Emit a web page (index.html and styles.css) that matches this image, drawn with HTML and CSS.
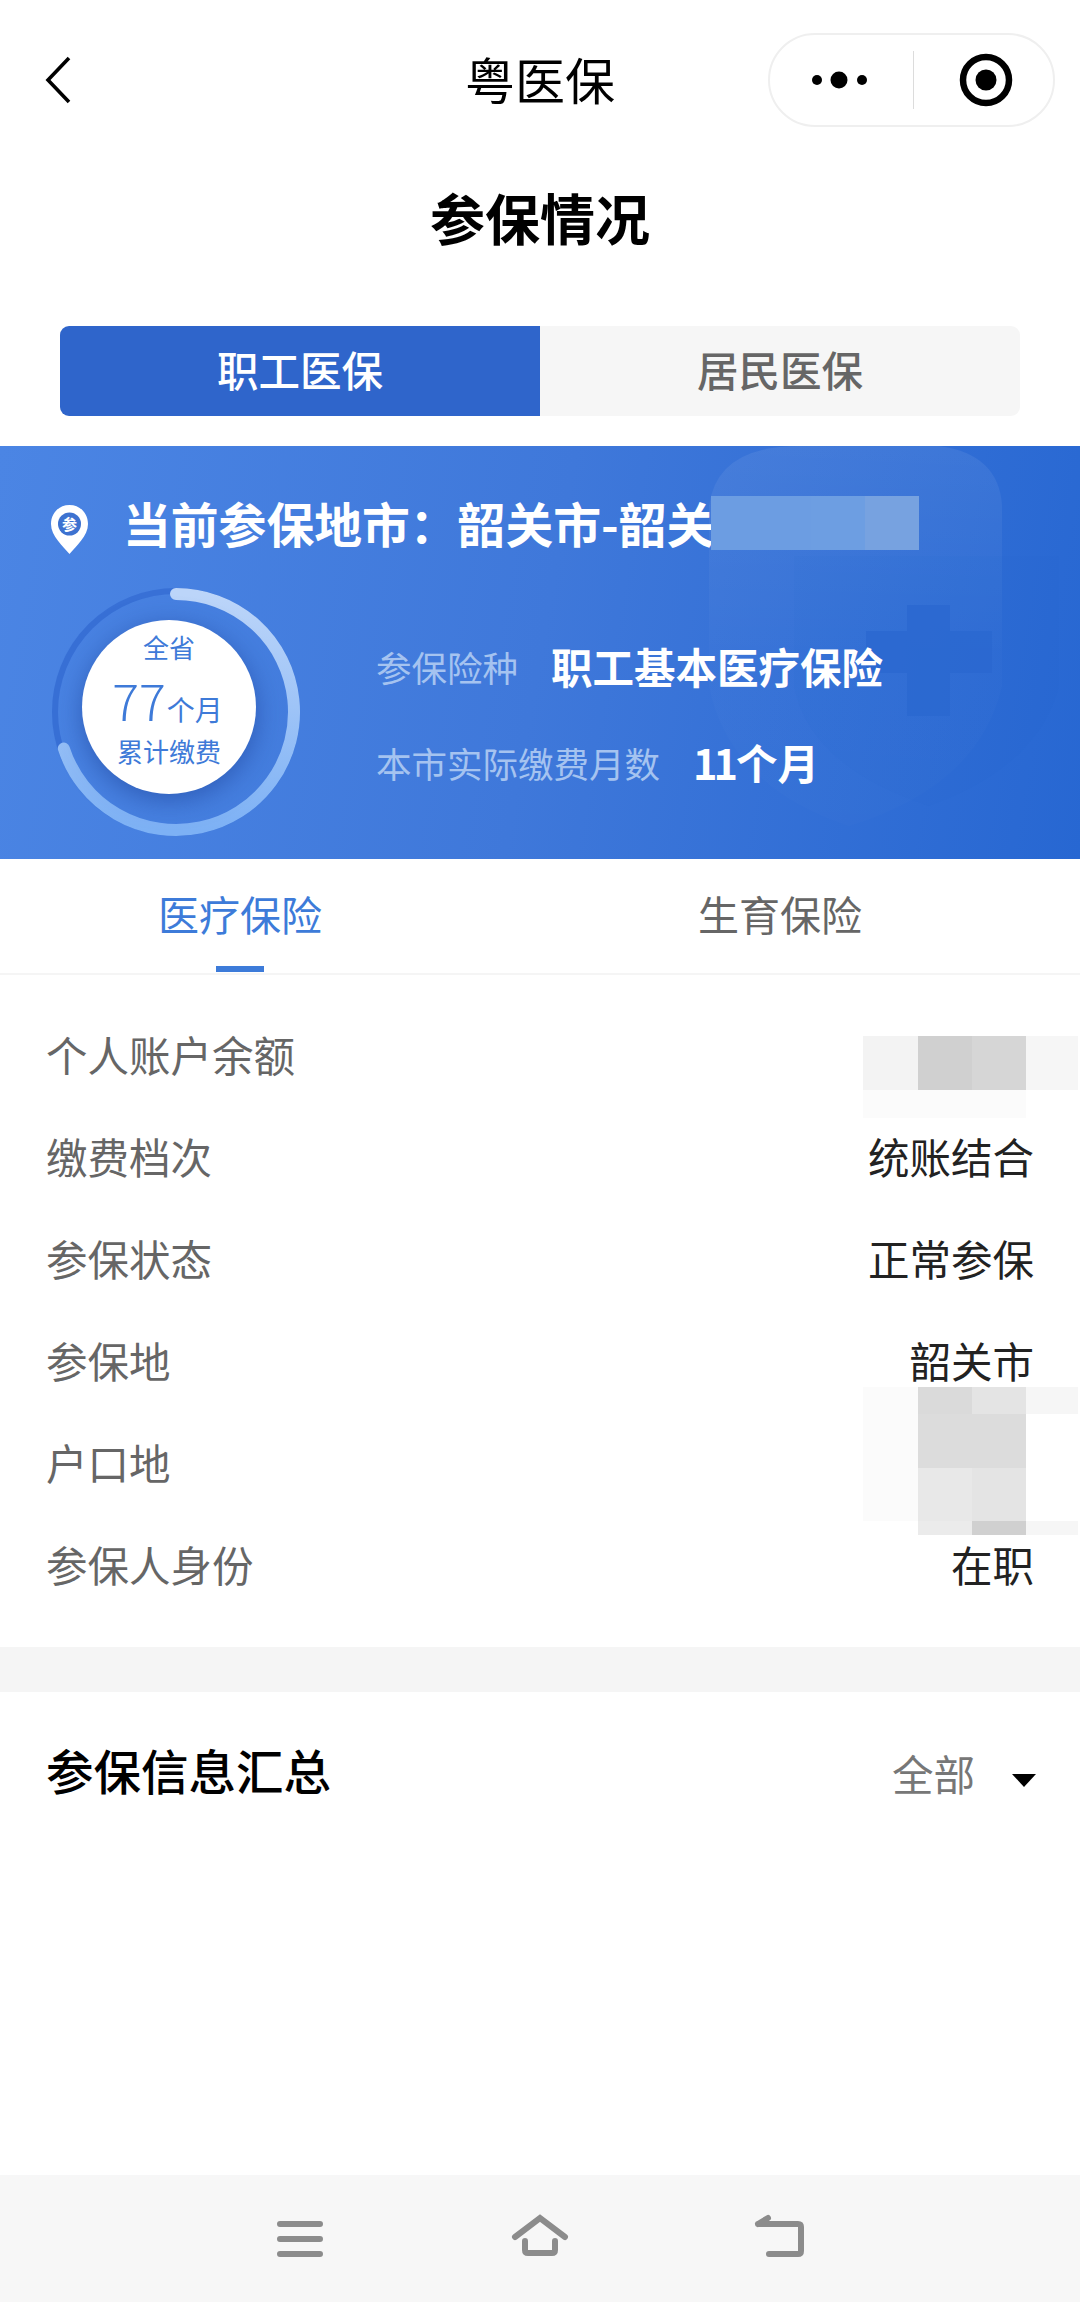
FILE: index.html
```html
<!DOCTYPE html>
<html lang="zh-CN">
<head>
<meta charset="utf-8">
<title>粤医保</title>
<link rel="stylesheet" href="styles.css">
</head>
<body>
<div class="page">
  <header class="nav">
    <svg class="nav-back" width="28" height="48" viewBox="0 0 28 48"><path d="M25 2 L4 24 L25 46" fill="none" stroke="#000" stroke-width="3.6"/></svg>
    <div class="nav-title">粤医保</div>
    <div class="capsule">
      <svg class="capsule-more" width="143" height="94" viewBox="0 0 143 94"><circle cx="47" cy="48" r="5" fill="#000"/><circle cx="69" cy="48" r="8.5" fill="#000"/><circle cx="92" cy="48" r="5" fill="#000"/></svg>
      <span class="capsule-line"></span>
      <svg class="capsule-target" width="143" height="94" viewBox="0 0 143 94"><circle cx="72" cy="48" r="23" fill="none" stroke="#000" stroke-width="6.5"/><circle cx="72" cy="48" r="10.5" fill="#000"/></svg>
    </div>
  </header>

  <h1 class="page-title">参保情况</h1>

  <div class="switch">
    <div class="switch-item is-on">职工医保</div>
    <div class="switch-item">居民医保</div>
  </div>

  <section class="hero">
    <svg class="hero-mark" width="371" height="413" viewBox="0 0 371 413">
      <defs>
        <linearGradient id="fade" x1="0" y1="0" x2="0" y2="1">
          <stop offset="0" stop-color="#fff" stop-opacity=".07"/>
          <stop offset=".55" stop-color="#fff" stop-opacity=".015"/>
          <stop offset="1" stop-color="#fff" stop-opacity=".01"/>
        </linearGradient>
      </defs>
      <path d="M0 60 Q8 0 90 0 L230 0 Q290 8 293 60 L293 240 Q270 340 140 380 Q20 340 0 240 Z" fill="url(#fade)"/>
      <path d="M85 110 L350 110 L350 240 Q330 320 220 360 Q100 320 85 240 Z" fill="#2a68d0" fill-opacity=".06"/>
      <path d="M198 159 H241 V185 H283 V227 H241 V270 H198 V227 H157 V185 H198 Z" fill="#2a68d0" fill-opacity=".8"/>
    </svg>
    <div class="hero-city">
      <svg class="pin" width="37" height="49" viewBox="0 0 37 49">
        <path d="M18.5 0 C8 0 0 8 0 19 C0 31 12 41 18.5 49 C25 41 37 31 37 19 C37 8 29 0 18.5 0 Z" fill="#fff"/>
        <circle cx="18.5" cy="19" r="11.5" fill="#3d72d0"/>
        <text x="18.5" y="24.5" text-anchor="middle" class="pin-text">参</text>
      </svg>
      <span class="city-text">当前参保地市：韶关市-韶关</span>
      <div class="hero-mosaic">
        <span class="hm1"></span><span class="hm2"></span><span class="hm3"></span>
      </div>
    </div>
    <div class="hero-body">
      <div class="gauge">
        <svg class="gauge-ring" width="260" height="260" viewBox="0 0 260 260">
          <defs>
            <linearGradient id="arc" x1="0" y1="0" x2="0" y2="1">
              <stop offset="0" stop-color="#bcd5f9"/>
              <stop offset="1" stop-color="#7db1f5"/>
            </linearGradient>
          </defs>
          <circle cx="130" cy="130" r="121" fill="none" stroke="#3870d6" stroke-width="6"/>
          <path d="M130 12 A118 118 0 1 1 17.8 166.5" fill="none" stroke="url(#arc)" stroke-width="12" stroke-linecap="round"/>
        </svg>
        <div class="gauge-core">
          <div class="core-line">全省</div>
          <div class="core-num"><span class="num">77</span><span class="unit">个月</span></div>
          <div class="core-line">累计缴费</div>
        </div>
      </div>
      <div class="hero-info">
        <div class="info-row"><span class="info-label">参保险种</span><span class="info-value">职工基本医疗保险</span></div>
        <div class="info-row"><span class="info-label">本市实际缴费月数</span><span class="info-value"><span class="digits">11</span>个月</span></div>
      </div>
    </div>
  </section>

  <div class="tabs">
    <div class="tab is-on"><span class="tab-text">医疗保险</span><span class="tab-bar"></span></div>
    <div class="tab"><span class="tab-text">生育保险</span></div>
  </div>

  <div class="rows">
    <div class="row">
      <span class="row-label">个人账户余额</span>
      <div class="mosaic mosaic-a">
        <i class="g3"></i><i class="g8"></i><i class="g9"></i><i class="g4"></i>
        <i class="g1"></i><i class="g1"></i><i class="g1"></i><i></i>
      </div>
    </div>
    <div class="row"><span class="row-label">缴费档次</span><span class="row-value">统账结合</span></div>
    <div class="row"><span class="row-label">参保状态</span><span class="row-value">正常参保</span></div>
    <div class="row"><span class="row-label">参保地</span><span class="row-value">韶关市</span></div>
    <div class="row">
      <span class="row-label">户口地</span>
      <div class="mosaic mosaic-b">
        <i class="g1"></i><i class="g11"></i><i class="g12"></i><i class="g4"></i>
        <i class="g1"></i><i class="g10"></i><i class="g10"></i><i></i>
        <i class="g1"></i><i class="g13"></i><i class="g12"></i><i></i>
        <i></i><i class="g14"></i><i class="g8"></i><i class="g4"></i>
      </div>
    </div>
    <div class="row"><span class="row-label">参保人身份</span><span class="row-value">在职</span></div>
  </div>

  <div class="band"></div>

  <div class="summary">
    <h2 class="summary-title">参保信息汇总</h2>
    <div class="summary-filter"><span class="filter-text">全部</span><span class="filter-arrow"></span></div>
  </div>

  <footer class="sysbar">
    <svg width="60" height="60" viewBox="0 0 60 60"><path d="M10 15 H50 M10 30 H50 M10 45 H50" fill="none" stroke="#8c8c8c" stroke-width="6" stroke-linecap="round"/></svg>
    <svg width="60" height="60" viewBox="0 0 60 60"><path d="M5 28 L30 9 L55 28 M15 32 V41 Q15 44 18 44 H42 Q45 44 45 41 V32" fill="none" stroke="#8c8c8c" stroke-width="6" stroke-linecap="round"/></svg>
    <svg width="60" height="60" viewBox="0 0 60 60"><path d="M8 15 H48 Q51 15 51 18 V42 Q51 45 48 45 H19 M8 15 L18 9" fill="none" stroke="#8c8c8c" stroke-width="6" stroke-linecap="round"/></svg>
  </footer>
</div>
</body>
</html>
```

FILE: styles.css
```css
* { box-sizing: border-box; }
html, body { margin: 0; padding: 0; }
body {
  background: #fff;
  font-family: "Noto Sans CJK SC", "Noto Sans", sans-serif;
  color: #000;
}
.page {
  width: 1080px;
  height: 2302px;
  display: flex;
  flex-direction: column;
  overflow: hidden;
}

/* nav */
.nav {
  display: grid;
  grid-template-columns: 1fr auto 1fr;
  align-items: center;
  padding: 33px 25px 0;
}
.nav-back { justify-self: start; margin-left: 19px; }
.nav-title { font-size: 50px; line-height: 94px; margin-top: -4px; }
.capsule {
  justify-self: end;
  width: 287px;
  height: 94px;
  border: 2px solid #efefef;
  border-radius: 47px;
  display: flex;
  align-items: center;
}
.capsule-more, .capsule-target { flex: none; margin-top: -2px; }
.capsule-line { width: 1px; height: 58px; background: #dcdcdc; flex: none; }

.page-title {
  margin: 59px 0 0;
  font-size: 55px;
  line-height: 60px;
  font-weight: 700;
  text-align: center;
}

/* switch */
.switch {
  margin: 80px 60px 0;
  height: 90px;
  display: flex;
  border-radius: 9px;
  overflow: hidden;
  background: #f6f6f6;
}
.switch-item {
  flex: 1;
  display: flex;
  align-items: center;
  justify-content: center;
  padding-bottom: 5px;
  font-size: 41.5px;
  font-weight: 500;
  color: #666;
}
.switch-item.is-on { background: #2f65cb; color: #fff; }

/* hero */
.hero {
  position: relative;
  margin-top: 30px;
  height: 413px;
  background: linear-gradient(100deg, #4b85e4 0%, #3f78da 50%, #2767d2 100%);
  overflow: hidden;
}
.hero-mark { position: absolute; left: 709px; top: 0; }
.hero-city {
  position: relative;
  padding: 59px 0 0 51px;
  display: flex;
  align-items: center;
  gap: 35px;
  height: 107px;
}
.pin-text { font-size: 15px; fill: #fff; font-weight: 700; }
.city-text {
  font-size: 47.8px;
  line-height: 48px;
  font-weight: 700;
  color: #fff;
  white-space: nowrap;
  margin-bottom: 12px;
}
.hero-mosaic {
  position: absolute;
  left: 711px;
  top: 50px;
  height: 54px;
  display: flex;
}
.hero-mosaic span { display: block; height: 54px; }
.hm1 { width: 100px; background: #6c9de2; }
.hm2 { width: 54px; background: #6d9ee2; }
.hm3 { width: 54px; background: #77a2e0; }

.hero-body {
  position: relative;
  margin: 29px 0 0 46px;
  display: flex;
  gap: 70px;
}
.gauge { position: relative; width: 260px; height: 260px; flex: none; }
.gauge-ring { display: block; }
.gauge-core {
  position: absolute;
  left: 36px;
  top: 38px;
  width: 174px;
  height: 174px;
  border-radius: 50%;
  background: #fff;
  box-shadow: 0 6px 26px rgba(28, 64, 150, .55);
  color: #3e7ad8;
  text-align: center;
  padding-top: 10px;
}
.core-line { font-size: 26px; line-height: 34px; white-space: nowrap; }
.core-num {
  height: 70px;
  display: flex;
  align-items: baseline;
  justify-content: center;
  line-height: 70px;
  padding-right: 3px;
}
.num { font-size: 50px; font-weight: 300; }
.unit { font-size: 28px; margin-left: 1px; }

.hero-info { padding-top: 59px; display: flex; flex-direction: column; gap: 46px; }
.info-row { display: flex; align-items: center; gap: 33px; height: 50px; white-space: nowrap; }
.info-label { font-size: 35.5px; color: #a5c3f0; }
.info-value { font-size: 41.5px; font-weight: 700; color: #fff; }
.digits { letter-spacing: -4px; margin-right: 2px; }

/* tabs */
.tabs {
  display: grid;
  grid-template-columns: 480px 600px;
  height: 116px;
  border-bottom: 2px solid #f5f5f5;
  padding-top: 26px;
}
.tab { display: flex; flex-direction: column; align-items: center; }
.tab-text { font-size: 41px; line-height: 56px; color: #666; }
.tab.is-on .tab-text { color: #3d7bd9; }
.tab-bar { width: 48px; height: 6px; margin-top: 25px; background: #3d7bd9; }

/* rows */
.rows { padding: 28px 0 32px; }
.row {
  position: relative;
  height: 102px;
  display: flex;
  align-items: center;
  justify-content: space-between;
  padding: 0 46px;
  font-size: 41.5px;
}
.row-label { color: #666; }
.row-value { color: #222; margin-left: auto; }
.mosaic { position: absolute; display: grid; grid-template-columns: 55px 54px 54px 52px; }
.mosaic-a { left: 863px; top: 33px; grid-template-rows: 54px 28px; }
.mosaic-b { left: 863px; top: -24px; grid-template-rows: 27px 54px 53px 14px; }
.g1 { background: #fbfbfb; }
.g3 { background: #f3f3f3; }
.g4 { background: #f6f6f6; }
.g8 { background: #d0d0d0; }
.g9 { background: #d6d6d6; }
.g10 { background: #dcdcdc; }
.g11 { background: #dadada; }
.g12 { background: #e4e4e4; }
.g13 { background: #e8e8e8; }
.g14 { background: #ebebeb; }

.band { height: 45px; background: #f5f5f5; flex: none; }

/* summary */
.summary {
  height: 162px;
  display: flex;
  align-items: center;
  justify-content: space-between;
  padding: 0 44px 0 46px;
}
.summary-title { margin: 0 0 8px; font-size: 47.5px; font-weight: 500; }
.summary-filter { display: flex; align-items: center; gap: 37px; }
.filter-text { font-size: 41.5px; color: #777; }
.filter-arrow {
  width: 0;
  height: 0;
  margin-top: 14px;
  border-left: 12px solid transparent;
  border-right: 12px solid transparent;
  border-top: 13px solid #000;
}

/* system bar */
.sysbar {
  margin-top: auto;
  height: 127px;
  background: #f7f7f7;
  display: flex;
  justify-content: center;
  align-items: flex-start;
  gap: 180px;
  padding-top: 34px;
}
```
